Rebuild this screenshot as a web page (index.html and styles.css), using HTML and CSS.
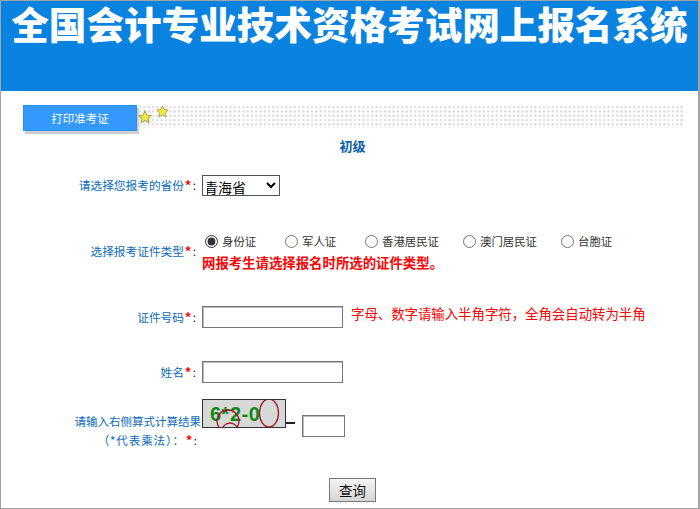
FILE: index.html
```html
<!DOCTYPE html>
<html lang="zh-CN">
<head>
<meta charset="utf-8">
<title>全国会计专业技术资格考试网上报名系统</title>
<link rel="stylesheet" href="styles.css">
</head>
<body>
<div class="frame">
  <header class="banner"><h1>全国会计专业技术资格考试网上报名系统</h1></header>
  <div class="tabbar">
    <div class="tab">打印准考证</div>
    <div class="dots">
      <svg class="star star-a" viewBox="0 0 24 24"><path d="M12 1.5l3.2 6.9 7.3.9-5.4 5.1 1.5 7.4L12 18.1l-6.6 3.7 1.5-7.4L1.5 9.3l7.3-.9z"/></svg>
      <svg class="star star-b" viewBox="0 0 24 24"><path d="M12 1.5l3.2 6.9 7.3.9-5.4 5.1 1.5 7.4L12 18.1l-6.6 3.7 1.5-7.4L1.5 9.3l7.3-.9z"/></svg>
    </div>
  </div>
  <h2 class="level">初级</h2>
  <form class="form">
    <div class="row row-province">
      <label class="label">请选择您报考的省份<b>*</b><i>:</i></label>
      <div class="field"><select class="select"><option>青海省</option></select></div>
    </div>
    <div class="row row-type">
      <label class="label">选择报考证件类型<b>*</b><i>:</i></label>
      <div class="field">
        <div class="radios">
          <label class="radio"><input type="radio" name="t" checked>身份证</label>
          <label class="radio"><input type="radio" name="t">军人证</label>
          <label class="radio"><input type="radio" name="t">香港居民证</label>
          <label class="radio"><input type="radio" name="t">澳门居民证</label>
          <label class="radio"><input type="radio" name="t">台胞证</label>
        </div>
        <div class="warn">网报考生请选择报名时所选的证件类型。</div>
      </div>
    </div>
    <div class="row row-id">
      <label class="label">证件号码<b>*</b><i>:</i></label>
      <div class="field inline"><input class="text" type="text"><span class="hint">字母、数字请输入半角字符，全角会自动转为半角</span></div>
    </div>
    <div class="row row-name">
      <label class="label">姓名<b>*</b><i>:</i></label>
      <div class="field"><input class="text" type="text"></div>
    </div>
    <div class="row row-captcha">
      <label class="label two">请输入右侧算式计算结果<br><span class="sub">（*代表乘法）：<b>*</b><i>:</i></span></label>
      <div class="field inline top">
        <div class="captcha"><span>6*2-0</span>
          <svg class="scribble" viewBox="0 0 84 27"><ellipse cx="66" cy="13" rx="9.500" ry="14"/><circle cx="25" cy="21" r="11"/><circle cx="27" cy="31" r="8"/></svg>
        </div>
        <span class="dash"></span>
        <input class="text small" type="text">
      </div>
    </div>
    <div class="actions"><button class="btn" type="button">查询</button></div>
  </form>
</div>
</body>
</html>
```

FILE: styles.css
```css
* { box-sizing: border-box; }
html, body { margin: 0; height: 100%; }
body { font-family: "Noto Sans CJK SC", "Liberation Sans", sans-serif; background: #fff; overflow: hidden; }
.frame { width: 700px; height: 509px; border: 1px solid #a3a3a3; border-right-width: 2px; overflow: hidden; }
.banner { height: 90px; background: #0a82e0; padding-top: 2px; }
.banner h1 { margin: 0; color: #fff; font-family: "Liberation Sans", "Noto Sans CJK SC", sans-serif; font-size: 37.600px; line-height: 46px; font-weight: 900; text-align: center; white-space: nowrap; }
.tabbar { display: flex; margin: 14px 15px 0 22px; height: 29px; }
.tab { width: 114px; height: 26px; background: #3399ff; border: 1px solid #2a8df0; color: #fff; font-size: 11.500px; line-height: 24px; text-align: center; box-shadow: 2px 3px 0 0 #cfcfcf; }
.dots { position: relative; flex: 1; height: 23px; margin-left: 1px; background-image: radial-gradient(circle, #dcdcdc 1px, transparent 1.400px); background-size: 4.300px 4.300px; }
.star { position: absolute; width: 14px; height: 14px; }
.star path { fill: #f4ec3c; stroke: #a9a560; stroke-width: 1.800; stroke-linejoin: round; }
.star-a { left: 0; top: 5px; }
.star-b { left: 18px; top: 0; width: 13px; height: 13px; }
.level { margin: 2px 0 0; font-size: 13px; line-height: 20px; color: #0d5ea8; font-weight: 700; text-align: center; padding-left: 6px; }
.form { display: flex; flex-direction: column; }
.row { display: grid; grid-template-columns: 200px 1fr; align-items: center; }
.label { text-align: right; color: #0b6bb8; font-size: 11.700px; line-height: 19px; white-space: nowrap; padding-right: 5px; position: relative; top: -1px; }
.label b { display: inline-block; width: 8px; text-align: center; color: #f00; font-weight: 700; font-size: 13px; line-height: 12px; letter-spacing: 0; }
.label i { display: inline-block; width: 4px; color: #123; font-style: normal; letter-spacing: 0; }
.field { padding-left: 1px; }
.inline { display: flex; align-items: center; }
.top { align-items: flex-start; }
.row-province { margin-top: 19px; height: 21px; }
.select { display: block; width: 78px; height: 21px; font-family: inherit; font-size: 14px; line-height: 18px; color: #000; background: #fff; border: 1px solid #555; padding: 0; border-radius: 0; text-indent: -3px; }
.row-type { margin-top: 35px; height: 38px; }
.radios { display: flex; height: 18px; align-items: center; position: relative; top: 1px; }
.radio { width: 80px; display: flex; align-items: center; font-size: 11.400px; color: #333; white-space: nowrap; }
.radio:nth-child(1) { width: 83px; padding-left: 3px; }
.radio:nth-child(3) { width: 98px; }
.radio:nth-child(4) { width: 98px; }
.radio input { margin: 0 4px 0 0; width: 13px; height: 13px; accent-color: #333; }
.warn { color: #f00; font-size: 13.400px; line-height: 18px; font-weight: 700; white-space: nowrap; margin-top: 4px; }
.row-id { margin-top: 37px; height: 22px; }
.text { width: 141px; height: 22px; border: 1px solid #777; background: #fff; padding: 0; border-radius: 0; display: block; box-shadow: inset 1px 1px 0 #bbb; }
.hint { color: #f00; font-size: 13.400px; margin-left: 8px; white-space: nowrap; line-height: 17px; position: relative; top: -4px; }
.row-name { margin-top: 33px; height: 22px; }
.row-captcha { margin-top: 16px; height: 46px; align-items: start; }
.label.two { padding-top: 14px; padding-right: 0; font-size: 11.500px; }
.sub { display: inline-block; padding-right: 4px; letter-spacing: .9px; }
.captcha { position: relative; width: 84px; height: 29px; background: #d8d8d8; border: 1px solid #333; overflow: hidden; color: #0b8a18; font-size: 20px; font-weight: 700; line-height: 29px; font-family: "Liberation Sans", sans-serif; padding-left: 7px; letter-spacing: .5px; white-space: nowrap; }
.scribble { position: absolute; left: 0; top: 0; width: 84px; height: 27px; }
.scribble ellipse, .scribble circle { fill: none; stroke: #a01a2a; stroke-width: 1.300; }
.dash { width: 9px; height: 2px; background: #222; margin: 23px 0 0 0; }
.small { width: 43px; height: 22px; margin: 16px 0 0 7px; }
.actions { display: flex; justify-content: flex-start; margin-top: 33px; padding-left: 328px; }
.btn { width: 47px; height: 24px; background: linear-gradient(#f4f4f4, #d6d6d6); border: 1px solid #777; font-family: inherit; font-size: 13.500px; color: #111; padding: 0; line-height: 20px; }
```
